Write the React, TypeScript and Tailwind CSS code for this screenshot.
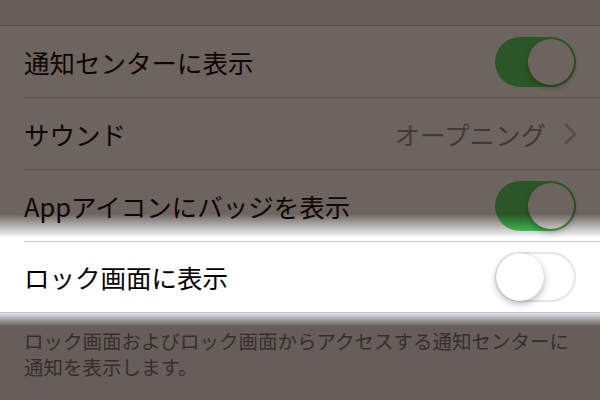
import React from "react";

function Toggle({ on }: { on: boolean }) {
  if (on) {
    return (
      <div className="relative w-[81px] h-[50px] rounded-full bg-[#4cd964] shrink-0">
        <div className="absolute right-[2px] top-[2px] w-[46px] h-[46px] rounded-full bg-white shadow-[0_3px_6px_rgba(0,0,0,0.3)]" />
      </div>
    );
  }
  return (
    <div className="relative w-[81px] h-[50px] rounded-full bg-white border-2 border-[#e5e5ea] shrink-0">
      <div className="absolute left-[-1px] top-[-1px] w-[48px] h-[48px] rounded-full bg-white shadow-[0_3px_7px_rgba(0,0,0,0.28),0_0_1px_rgba(0,0,0,0.2)]" />
    </div>
  );
}

function Row({
  label,
  right,
  last,
  h,
}: {
  label: string;
  right: React.ReactNode;
  last?: boolean;
  h: string;
}) {
  return (
    <div className="pl-6">
      <div
        className={
          "flex items-center justify-between pr-6 " +
          h +
          (last ? "" : " border-b border-[#c8c7cc]")
        }
      >
        <span className="text-[25.5px] leading-none text-black">{label}</span>
        {right}
      </div>
    </div>
  );
}

export default function App() {
  return (
    <div
      className="relative w-[600px] h-[400px] overflow-hidden bg-[#efeff4]"
      style={{ fontFamily: '"Noto Sans CJK JP", "Noto Sans", sans-serif' }}
    >
      <div className="h-[25px]" />
      <div className="bg-white border-t border-b border-[#c8c7cc]">
        <Row label="通知センターに表示" h="h-[72px]" right={<Toggle on />} />
        <Row
          label="サウンド"
          h="h-[72px]"
          right={
            <div className="flex items-center gap-[18px]">
              <span className="text-[25.5px] leading-none text-[#8e8e93]">オープニング</span>
              <svg width="13" height="22" viewBox="0 0 13 22" className="mr-[-1px]">
                <path d="M2 2 L11 11 L2 20" fill="none" stroke="#c7c7cc" strokeWidth="3" strokeLinecap="round" strokeLinejoin="round" />
              </svg>
            </div>
          }
        />
        <Row label="Appアイコンにバッジを表示" h="h-[72px]" right={<Toggle on />} />
        <Row label="ロック画面に表示" h="h-[70px]" last right={<Toggle on={false} />} />
      </div>
      <div className="pl-6 pr-6 pt-[15px] text-[19.5px] leading-[26px] text-[#6d6d72]">
        <div>ロック画面およびロック画面からアクセスする通知センターに</div>
        <div>通知を表示します。</div>
      </div>

      <div className="absolute inset-0 pointer-events-none flex flex-col">
        <div className="h-[214px] bg-[#170a03a1]" />
        <div className="h-[24px] bg-linear-to-b from-[#170a03a1] to-[#170a0300]" />
        <div className="h-[74px]" />
        <div className="h-[14px] bg-linear-to-b from-[#170a0300] to-[#170a03a1]" />
        <div className="flex-1 bg-[#170a03a1]" />
      </div>
    </div>
  );
}
